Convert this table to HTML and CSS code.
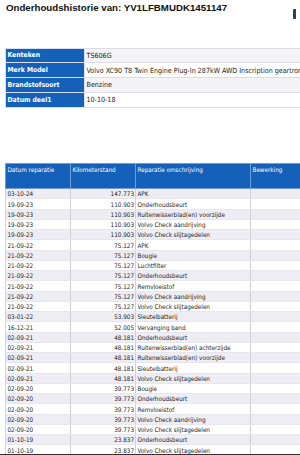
FILE: index.html
```html
<!DOCTYPE html>
<html lang="nl">
<head>
<meta charset="utf-8">
<title>Onderhoudshistorie</title>
<link rel="stylesheet" href="styles.css">
</head>
<body>
<div class="page">
  <h1 class="title">Onderhoudshistorie van: YV1LFBMUDK1451147</h1>
  <span class="logo-edge"></span>
  <table class="info">
    <tr><th>Kenteken</th><td>TS606G</td></tr>
    <tr><th>Merk Model</th><td>Volvo XC90 T8 Twin Engine Plug-In 287kW AWD Inscription geartronic</td></tr>
    <tr><th>Brandstofsoort</th><td>Benzine</td></tr>
    <tr><th>Datum deel1</th><td>10-10-18</td></tr>
  </table>
  <table class="history">
    <colgroup>
      <col class="c-date"><col class="c-km"><col class="c-desc"><col class="c-edit">
    </colgroup>
    <thead>
      <tr><th>Datum reparatie</th><th>Kilometerstand</th><th>Reparatie omschrijving</th><th>Bewerking</th></tr>
    </thead>
    <tbody>
      <tr><td>03-10-24</td><td class="km">147.773</td><td>APK</td><td></td></tr>
      <tr><td>19-09-23</td><td class="km">110.903</td><td>Onderhoudsbeurt</td><td></td></tr>
      <tr><td>19-09-23</td><td class="km">110.903</td><td>Ruitenwisserblad(en) voorzijde</td><td></td></tr>
      <tr><td>19-09-23</td><td class="km">110.903</td><td>Volvo Check aandrijving</td><td></td></tr>
      <tr><td>19-09-23</td><td class="km">110.903</td><td>Volvo Check slijtagedelen</td><td></td></tr>
      <tr><td>21-09-22</td><td class="km">75.127</td><td>APK</td><td></td></tr>
      <tr><td>21-09-22</td><td class="km">75.127</td><td>Bougie</td><td></td></tr>
      <tr><td>21-09-22</td><td class="km">75.127</td><td>Luchtfilter</td><td></td></tr>
      <tr><td>21-09-22</td><td class="km">75.127</td><td>Onderhoudsbeurt</td><td></td></tr>
      <tr><td>21-09-22</td><td class="km">75.127</td><td>Remvloeistof</td><td></td></tr>
      <tr><td>21-09-22</td><td class="km">75.127</td><td>Volvo Check aandrijving</td><td></td></tr>
      <tr><td>21-09-22</td><td class="km">75.127</td><td>Volvo Check slijtagedelen</td><td></td></tr>
      <tr><td>03-01-22</td><td class="km">53.903</td><td>Sleutelbatterij</td><td></td></tr>
      <tr><td>16-12-21</td><td class="km">52.005</td><td>Vervanging band</td><td></td></tr>
      <tr><td>02-09-21</td><td class="km">48.181</td><td>Onderhoudsbeurt</td><td></td></tr>
      <tr><td>02-09-21</td><td class="km">48.181</td><td>Ruitenwisserblad(en) achterzijde</td><td></td></tr>
      <tr><td>02-09-21</td><td class="km">48.181</td><td>Ruitenwisserblad(en) voorzijde</td><td></td></tr>
      <tr><td>02-09-21</td><td class="km">48.181</td><td>Sleutelbatterij</td><td></td></tr>
      <tr><td>02-09-21</td><td class="km">48.181</td><td>Volvo Check slijtagedelen</td><td></td></tr>
      <tr><td>02-09-20</td><td class="km">39.773</td><td>Bougie</td><td></td></tr>
      <tr><td>02-09-20</td><td class="km">39.773</td><td>Onderhoudsbeurt</td><td></td></tr>
      <tr><td>02-09-20</td><td class="km">39.773</td><td>Remvloeistof</td><td></td></tr>
      <tr><td>02-09-20</td><td class="km">39.773</td><td>Volvo Check aandrijving</td><td></td></tr>
      <tr><td>02-09-20</td><td class="km">39.773</td><td>Volvo Check slijtagedelen</td><td></td></tr>
      <tr><td>01-10-19</td><td class="km">23.837</td><td>Onderhoudsbeurt</td><td></td></tr>
      <tr><td>01-10-19</td><td class="km">23.837</td><td>Volvo Check slijtagedelen</td><td></td></tr>
    </tbody>
  </table>
</div>
<div class="bottom-bar"></div>
</body>
</html>
```
FILE: styles.css
```css
html, body {
  margin: 0;
  padding: 0;
  background: #ffffff;
  overflow: hidden;
}

.page {
  position: relative;
  width: 470px;
  padding: 1.5px 0 0 5px;
  font-family: "DejaVu Sans Condensed", "DejaVu Sans", "Liberation Sans", sans-serif;
  color: #1b1b1b;
}

.title {
  margin: 0 0 0 1px;
  font: bold 9.7px/11px "Liberation Sans", Arial, sans-serif;
  color: #111111;
}

.logo-edge {
  position: absolute;
  top: 9px;
  left: 293px;
  width: 3px;
  height: 10px;
  background: #2b3f6b;
  border-radius: 1px 0 0 1px;
}

.info {
  margin-top: 35px;
  width: 460px;
  border-collapse: collapse;
  font-size: 7.1px;
}

.info th,
.info td {
  height: 13.8px;
  padding: 0 1.5px;
  border: 1px solid #dcdce6;
  text-align: left;
  vertical-align: middle;
  white-space: nowrap;
}

.info th {
  width: 75px;
  background: #1560b8;
  color: #ffffff;
  font-weight: bold;
  font-size: 6.8px;
  border-color: #d6e0ee;
}

.info td {
  background: #f3f3f8;
  color: #222222;
}

.info tr:nth-child(2) td,
.info tr:nth-child(4) td {
  background: #ffffff;
}

.history {
  margin-top: 55px;
  width: 460px;
  border-collapse: collapse;
  table-layout: fixed;
  font-size: 6.3px;
}

.c-date { width: 65px; }
.c-km { width: 65px; }
.c-desc { width: 115px; }
.c-edit { width: 215px; }

.history th {
  height: 22px;
  padding: 2.5px 1.5px 0;
  background: #1560b8;
  color: #ffffff;
  font-weight: normal;
  text-align: left;
  vertical-align: top;
  border: 1px solid #6f9bd6;
  white-space: nowrap;
}

.history td {
  height: 9.25px;
  padding: 0 1.5px;
  line-height: 9px;
  border-left: 1px solid #cfcfd6;
  border-right: 1px solid #cfcfd6;
  border-bottom: 1px solid #e6e6ec;
  white-space: nowrap;
  color: #222222;
}

.history tbody tr:nth-child(odd) td {
  background: #ededf3;
}

.history tbody tr:nth-child(even) td {
  background: #ffffff;
}

.history td.km {
  text-align: right;
  padding-right: 1px;
}

.bottom-bar {
  position: fixed;
  left: 0;
  right: 0;
  bottom: 0;
  height: 1.5px;
  background: #2a3340;
}
```
